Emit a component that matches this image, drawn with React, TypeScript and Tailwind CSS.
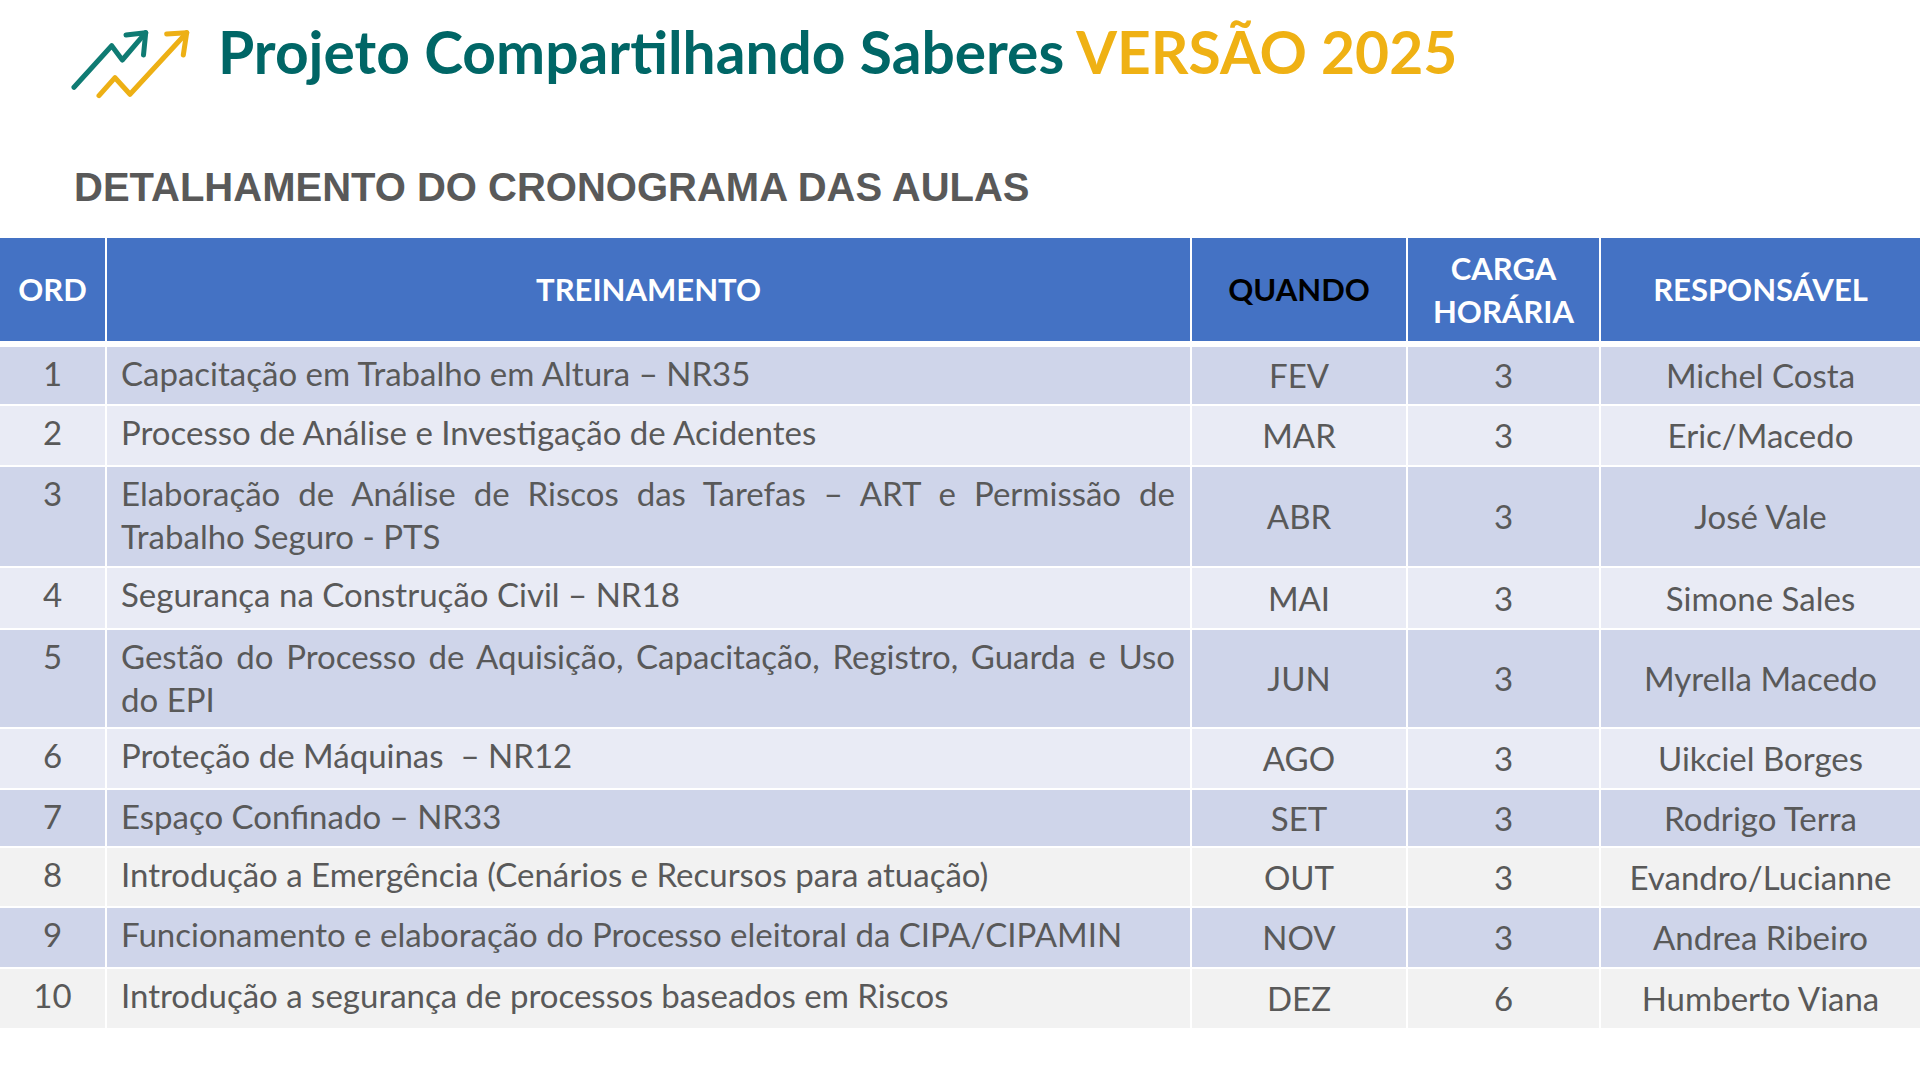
import React from 'react'

type Row = {
  ord: string
  name: string[]
  when: string
  hours: string
  owner: string
  h: string
  bg: string
}

const rows: Row[] = [
  { ord: '1', name: ['Capacitação em Trabalho em Altura – NR35'], when: 'FEV', hours: '3', owner: 'Michel Costa', h: 'h-[57px]', bg: 'bg-[#cfd5ea]' },
  { ord: '2', name: ['Processo de Análise e Investigação de Acidentes'], when: 'MAR', hours: '3', owner: 'Eric/Macedo', h: 'h-[59px]', bg: 'bg-[#e9ebf5]' },
  { ord: '3', name: ['Elaboração de Análise de Riscos das Tarefas – ART e Permissão de', 'Trabalho Seguro - PTS'], when: 'ABR', hours: '3', owner: 'José Vale', h: 'h-[99px]', bg: 'bg-[#cfd5ea]' },
  { ord: '4', name: ['Segurança na Construção Civil – NR18'], when: 'MAI', hours: '3', owner: 'Simone Sales', h: 'h-[60px]', bg: 'bg-[#e9ebf5]' },
  { ord: '5', name: ['Gestão do Processo de Aquisição, Capacitação, Registro, Guarda e Uso', 'do EPI'], when: 'JUN', hours: '3', owner: 'Myrella Macedo', h: 'h-[97px]', bg: 'bg-[#cfd5ea]' },
  { ord: '6', name: ['Proteção de Máquinas\u00a0 – NR12'], when: 'AGO', hours: '3', owner: 'Uikciel Borges', h: 'h-[59px]', bg: 'bg-[#e9ebf5]' },
  { ord: '7', name: ['Espaço Confinado – NR33'], when: 'SET', hours: '3', owner: 'Rodrigo Terra', h: 'h-[56px]', bg: 'bg-[#cfd5ea]' },
  { ord: '8', name: ['Introdução a Emergência (Cenários e Recursos para atuação)'], when: 'OUT', hours: '3', owner: 'Evandro/Lucianne', h: 'h-[58px]', bg: 'bg-[#f2f2f2]' },
  { ord: '9', name: ['Funcionamento e elaboração do Processo eleitoral da CIPA/CIPAMIN'], when: 'NOV', hours: '3', owner: 'Andrea Ribeiro', h: 'h-[59px]', bg: 'bg-[#cfd5ea]' },
  { ord: '10', name: ['Introdução a segurança de processos baseados em Riscos'], when: 'DEZ', hours: '6', owner: 'Humberto Viana', h: 'h-[59px]', bg: 'bg-[#f2f2f2]' },
]

const cols = 'grid grid-cols-[105px_1083px_214px_191px_319px] gap-x-[2px]'

function Logo() {
  return (
    <svg width="122" height="72" viewBox="0 0 122 72" fill="none" strokeWidth="5" strokeLinecap="round" strokeLinejoin="round">
      <polyline points="4,57.3 41.7,15.7 52.3,30 75.7,2.7" stroke="#0f7b73" />
      <polyline points="56,5 75.7,2.7 73.5,25" stroke="#0f7b73" />
      <polyline points="29,65.7 45,47.7 60,64.3 116.7,2.7" stroke="#edb015" />
      <polyline points="96.7,4 116.7,2.7 113.3,25" stroke="#edb015" />
    </svg>
  )
}

export default function App() {
  return (
    <div className="w-[1920px] h-[1080px] bg-white overflow-hidden font-[Lato,sans-serif]">
      {/* Header */}
      <div className="flex items-start pl-[70px] pt-[22px]">
        <div className="mt-[8px]">
          <Logo />
        </div>
        <h1 className="ml-[26px] text-[58.7px] leading-[59px] font-bold text-[#006666] whitespace-nowrap">
          Projeto Compartilhando Saberes <span className="text-[#efb114]">VERSÃO 2025</span>
        </h1>
      </div>

      <h2 className="mt-[65px] pl-[74px] text-[40px] leading-[40px] font-bold text-[#595959] font-['Liberation_Sans',Arial,sans-serif]">
        DETALHAMENTO DO CRONOGRAMA DAS AULAS
      </h2>

      {/* Table */}
      <div className="mt-[31px] flex flex-col gap-[2px]">
        <div className={`${cols} h-[103px] mb-[4px] text-[31px] leading-[43px] font-bold text-white`}>
          <div className="bg-[#4472c4] flex items-center justify-center">ORD</div>
          <div className="bg-[#4472c4] flex items-center justify-center">TREINAMENTO</div>
          <div className="bg-[#4472c4] flex items-center justify-center text-black">QUANDO</div>
          <div className="bg-[#4472c4] flex flex-col items-center justify-center text-center">
            <span>CARGA</span>
            <span>HORÁRIA</span>
          </div>
          <div className="bg-[#4472c4] flex items-center justify-center">RESPONSÁVEL</div>
        </div>

        {rows.map((r) => (
          <div key={r.ord} className={`${cols} ${r.h} text-[33px] leading-[43px] text-[#595959]`}>
            <div className={`${r.bg} pt-[5px] text-center`}>{r.ord}</div>
            <div className={`${r.bg} pt-[5px] pl-[14px] pr-[15px] whitespace-nowrap`}>
              {r.name.length > 1 ? (
                <>
                  <div className="text-justify [text-align-last:justify] whitespace-normal">{r.name[0]}</div>
                  <div>{r.name[1]}</div>
                </>
              ) : (
                r.name[0]
              )}
            </div>
            <div className={`${r.bg} flex items-center justify-center`}>{r.when}</div>
            <div className={`${r.bg} flex items-center justify-center`}>{r.hours}</div>
            <div className={`${r.bg} flex items-center justify-center whitespace-nowrap`}>{r.owner}</div>
          </div>
        ))}
      </div>
    </div>
  )
}
